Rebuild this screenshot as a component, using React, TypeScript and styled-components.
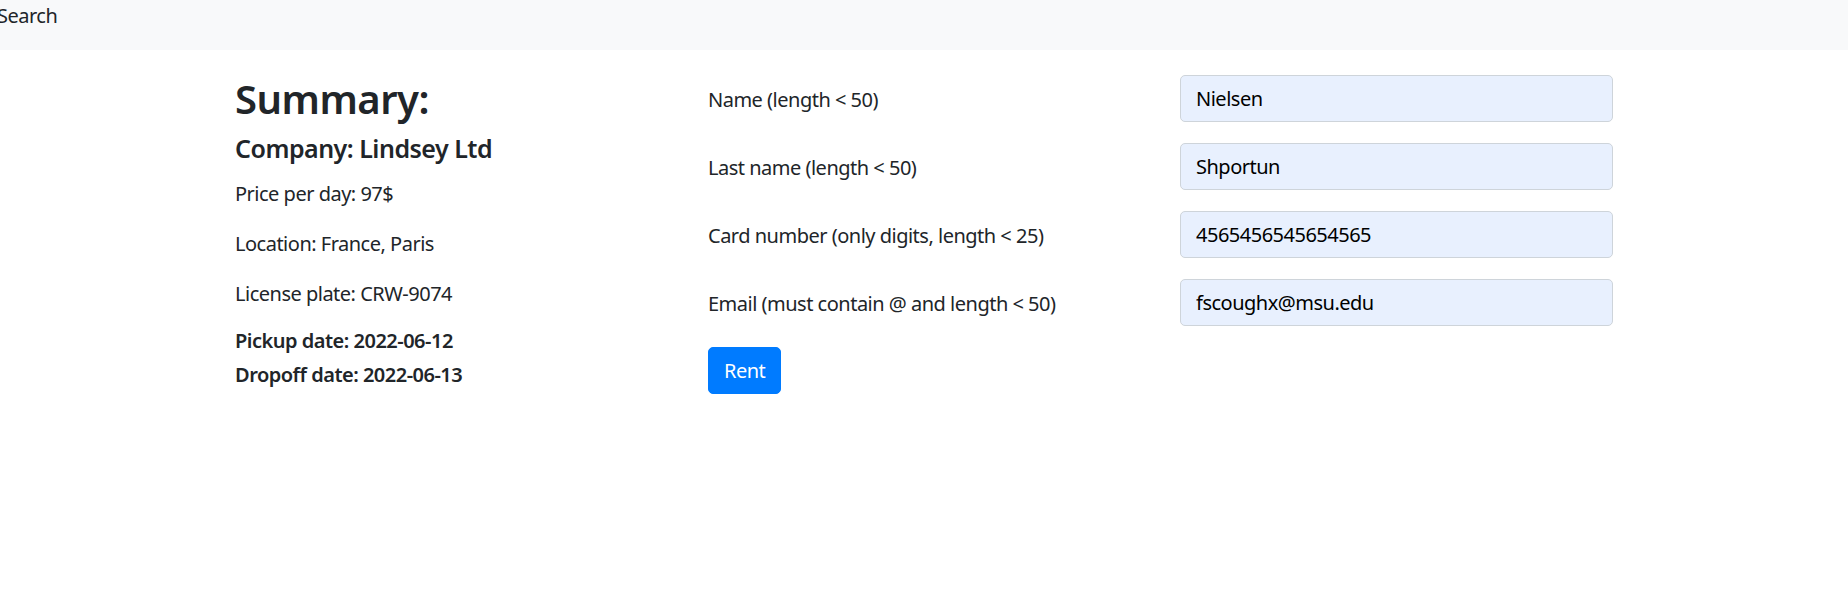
import React from "react";
import styled, { createGlobalStyle } from "styled-components";

const GlobalStyle = createGlobalStyle`
  body {
    margin: 0;
    background: #fff;
    color: #212529;
    font-family: "Noto Sans", "Open Sans", sans-serif;
    font-size: 20px;
    line-height: 1.5;
    letter-spacing: -0.025em;
  }
`;

const NavBar = styled.nav`
  height: 50px;
  background: #f8f9fa;
  display: flex;
  align-items: flex-start;
`;

const NavLink = styled.a`
  margin-left: -3px;
  padding-top: 1px;
  font-size: 20px;
  line-height: 30px;
  color: #212529;
  text-decoration: none;
`;

const Main = styled.main`
  width: 1378px;
  margin: 0 auto;
  padding-top: 25px;
  display: grid;
  grid-template-columns: 473fr 472fr 433fr;
  align-items: start;
`;

const Summary = styled.section`
  display: flex;
  flex-direction: column;
`;

const Title = styled.h2`
  margin: 0 0 10px;
  font-size: 40px;
  line-height: 48px;
  font-weight: 600;
`;

const Company = styled.h5`
  margin: 0 0 16px;
  font-size: 25px;
  line-height: 30px;
  font-weight: 600;
`;

const Info = styled.p`
  margin: 0 0 20px;
  font-size: 20px;
  line-height: 30px;
`;

const DateLine = styled.h6`
  margin: 0 0 10px;
  font-size: 20px;
  line-height: 24px;
  font-weight: 600;
`;

const Form = styled.form`
  grid-column: 2 / span 2;
  display: grid;
  grid-template-columns: 472fr 433fr;
  row-gap: 21px;
  align-items: center;
`;

const Label = styled.label`
  font-size: 20px;
  line-height: 30px;
  padding-top: 3px;
`;

const Input = styled.input`
  box-sizing: border-box;
  width: 100%;
  height: 47px;
  padding: 7.5px 15px;
  font-family: inherit;
  letter-spacing: inherit;
  font-size: 20px;
  line-height: 30px;
  color: #000;
  background: #e8f0fe;
  border: 1px solid #ced4da;
  border-radius: 5px;
  outline: none;
`;

const RentButton = styled.button`
  justify-self: start;
  height: 47px;
  padding: 7.5px 15px;
  font-family: inherit;
  letter-spacing: inherit;
  font-size: 20px;
  line-height: 30px;
  color: #fff;
  background: #007bff;
  border: 1px solid #007bff;
  border-radius: 5px;
  cursor: pointer;
`;

const fields = [
  { label: "Name (length < 50)", value: "Nielsen" },
  { label: "Last name (length < 50)", value: "Shportun" },
  { label: "Card number (only digits, length < 25)", value: "4565456545654565" },
  { label: "Email (must contain @ and length < 50)", value: "fscoughx@msu.edu" },
];

const App: React.FC = () => {
  return (
    <>
      <GlobalStyle />
      <NavBar>
        <NavLink href="#">Search</NavLink>
      </NavBar>
      <Main>
        <Summary>
          <Title>Summary:</Title>
          <Company>Company: Lindsey Ltd</Company>
          <Info>Price per day: 97$</Info>
          <Info>Location: France, Paris</Info>
          <Info>License plate: CRW-9074</Info>
          <DateLine>Pickup date: 2022-06-12</DateLine>
          <DateLine>Dropoff date: 2022-06-13</DateLine>
        </Summary>
        <Form onSubmit={(e) => e.preventDefault()}>
          {fields.map((f) => (
            <React.Fragment key={f.label}>
              <Label>{f.label}</Label>
              <Input defaultValue={f.value} />
            </React.Fragment>
          ))}
          <RentButton type="submit">Rent</RentButton>
        </Form>
      </Main>
    </>
  );
};

export default App;
